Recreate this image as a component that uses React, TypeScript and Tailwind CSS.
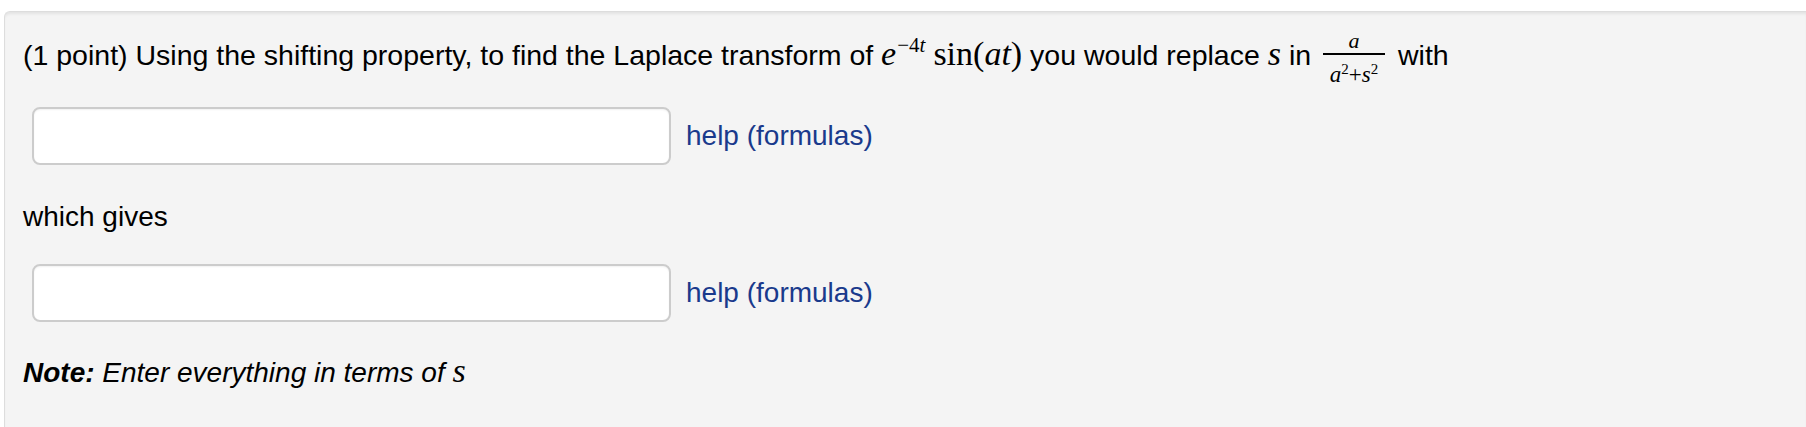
import React from "react";

const sans = { fontFamily: '"Liberation Sans", Arial, Helvetica, sans-serif' };
const serif = { fontFamily: '"Liberation Serif", "Times New Roman", serif' };

function MI({ children, size = "text-[34px]" }: { children: React.ReactNode; size?: string }) {
  return (
    <span className={`italic ${size}`} style={serif}>
      {children}
    </span>
  );
}

function MR({ children, size = "text-[34px]" }: { children: React.ReactNode; size?: string }) {
  return (
    <span className={size} style={serif}>
      {children}
    </span>
  );
}

function Answer() {
  return (
    <div className="flex items-center">
      <input
        type="text"
        className="ml-[9px] w-[639px] h-[58px] bg-white border-2 border-[#cccccc] rounded-[8px] shadow-[inset_0_1px_2px_rgba(0,0,0,0.06)] outline-none"
      />
      <a className="ml-[15px] text-[#1a3a8c] leading-[40px]" href="#">
        help (formulas)
      </a>
    </div>
  );
}

export default function App() {
  return (
    <div className="w-[1806px] h-[427px] bg-white pt-[11px] pl-[4px] overflow-hidden" style={sans}>
      <div className="h-[416px] bg-[#f4f4f4] border-t border-l border-[#dddddd] rounded-tl-[6px] shadow-[inset_0_3px_3px_-1px_rgba(0,0,0,0.07)] pl-[18px] pt-[16px] text-[28px] text-black">
        <div className="h-[40px] leading-[40px] whitespace-nowrap text-[28.5px]">
          (1 point) Using the shifting property, to find the Laplace transform of{" "}
          <span className="leading-none">
            <MI>e</MI>
            <span className="inline-block align-[13px] ml-[1px] leading-none">
              <MR size="text-[21px]">−4</MR>
              <MI size="text-[21px]">t</MI>
            </span>
            <span className="ml-[8px]">
              <MR>sin(</MR>
              <MI>at</MI>
              <MR>)</MR>
            </span>
          </span>{" "}
          you would replace <MI>s</MI> in
          <span className="inline-flex flex-col items-center align-[17px] w-[62px] ml-[12px] mr-[5px] text-[22px]">
            <span className="leading-[18px]">
              <MI size="text-[22px]">a</MI>
            </span>
            <span className="block w-full h-[1.5px] bg-black mt-[3px]" />
            <span className="leading-[20px] pt-[1px] whitespace-nowrap">
              <MI size="text-[23px]">a</MI>
              <span className="inline-block align-[8px] leading-none">
                <MR size="text-[15px]">2</MR>
              </span>
              <MR size="text-[23px]">+</MR>
              <MI size="text-[23px]">s</MI>
              <span className="inline-block align-[8px] leading-none">
                <MR size="text-[15px]">2</MR>
              </span>
            </span>
          </span>{" "}
          with
        </div>

        <div className="mt-[39px]">
          <Answer />
        </div>

        <div className="mt-[32px] h-[40px] leading-[40px]">which gives</div>

        <div className="mt-[27px]">
          <Answer />
        </div>

        <div className="mt-[29px] h-[40px] leading-[40px] whitespace-nowrap">
          <span className="font-bold italic">Note:</span> <span className="italic">Enter everything in terms of </span>
          <MI>s</MI>
        </div>
      </div>
    </div>
  );
}
